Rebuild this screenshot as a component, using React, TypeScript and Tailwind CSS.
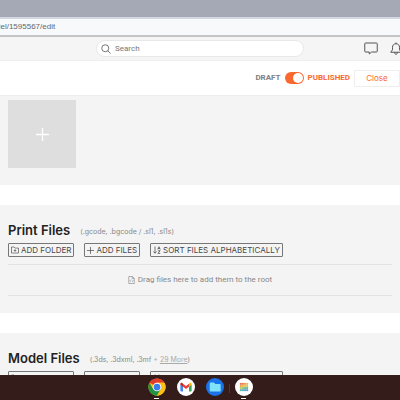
import { useState } from "react";
import type { ReactNode } from "react";

function FolderPlusIcon() {
  return (
    <svg width={8} height={8} viewBox="0 0 16 16" fill="none" stroke="currentColor" strokeWidth={1.3} aria-hidden="true">
      <path d="M1 14V2h5l2 2.2h7V14z" />
      <path d="M8 6.5v5M5.500 9h5" />
    </svg>
  );
}

function PlusIcon({ size = 7 }: { size?: number }) {
  return (
    <svg width={size} height={size} viewBox="0 0 14 14" fill="none" stroke="currentColor" strokeWidth={1.4} aria-hidden="true">
      <path d="M7 0v14M0 7h14" />
    </svg>
  );
}

function SortIcon() {
  return (
    <svg width={8} height={8} viewBox="0 0 16 16" fill="none" stroke="currentColor" strokeWidth={1.5} aria-hidden="true">
      <path d="M4 1v13M1 11l3 3.500L7 11" />
      <path d="M9.500 7 12 1.500 14.500 7M10.300 5h3.400M9.800 9.500h4.500l-4.500 5.300h4.700" />
    </svg>
  );
}

function FileCodeIcon() {
  return (
    <svg width={7} height={8} viewBox="0 0 14 16" fill="none" stroke="currentColor" strokeWidth={1.3} aria-hidden="true">
      <path d="M1.500 1h7.500l3.500 3.500V15h-11zM8.500 1v4h4" />
      <path d="M5.500 7.500 4 9.500l1.500 2M8.500 7.500l1.500 2-1.500 2" />
    </svg>
  );
}

function SearchIcon() {
  return (
    <svg width={10} height={10} viewBox="0 0 20 20" fill="none" stroke="currentColor" strokeWidth={1.8} aria-hidden="true">
      <circle cx={8.500} cy={8.500} r={7} />
      <path d="m13.500 13.500 5.500 5.500" />
    </svg>
  );
}

function ChatIcon() {
  return (
    <svg width={14} height={13} viewBox="0 0 28 26" fill="none" stroke="currentColor" strokeWidth={2} strokeLinejoin="round" aria-hidden="true">
      <path d="M3 2h22q1.500 0 1.500 1.500v15q0 1.500-1.500 1.500H15l-4.500 4V20H3q-1.500 0-1.500-1.500v-15Q1.500 2 3 2z" />
    </svg>
  );
}

function BellIcon() {
  return (
    <svg width={12} height={13} viewBox="0 0 24 26" fill="none" stroke="currentColor" strokeWidth={2} strokeLinejoin="round" aria-hidden="true">
      <path d="M12 3.500c-4.500 0-7 3-7 7v5L1.500 20.500h21L19 15.500v-5c0-4-2.500-7-7-7zM12 3.500V1" />
      <path d="M9 20.500c0 2.500 1.300 4 3 4s3-1.500 3-4" />
    </svg>
  );
}

function ChromeIcon() {
  return (
    <svg width={18} height={18} viewBox="0 0 48 48" aria-hidden="true">
      <circle cx={24} cy={24} r={23} fill="#fbc116" />
      <path d="M24 24 4.100 12.500A23 23 0 0 1 43.900 12.500H24z" fill="#e33b2e" />
      <path d="M4.100 12.500A23 23 0 0 0 24 47l10-17.300L24 24 14 29.700z" fill="#229342" />
      <path d="M43.900 12.500H24v11.500l10 5.700L24 47a23 23 0 0 0 19.900-34.500z" fill="#fbc116" />
      <circle cx={24} cy={24} r={11.500} fill="#fff" />
      <circle cx={24} cy={24} r={9} fill="#3b7ded" />
    </svg>
  );
}

function GmailIcon() {
  return (
    <svg width={18} height={18} viewBox="0 0 48 48" aria-hidden="true">
      <circle cx={24} cy={24} r={24} fill="#fff" />
      <path d="M9 17v17q0 2 2 2h5V22z" fill="#4285f4" />
      <path d="M39 17v17q0 2-2 2h-5V22z" fill="#34a853" />
      <path d="M32 15v8l7-5v-2c0-3-3-4-5-2.500z" fill="#fbbc04" />
      <path d="M16 15v8l8 6 8-6v-8l-8 6z" fill="#ea4335" />
      <path d="M9 16v2l7 5v-8l-2-1.500C12 12 9 13 9 16z" fill="#c5221f" />
    </svg>
  );
}

function FilesIcon() {
  return (
    <svg width={18} height={18} viewBox="0 0 48 48" aria-hidden="true">
      <circle cx={24} cy={24} r={24} fill="#1a73e8" />
      <path d="M10 14q0-2 2-2h9l4 4h12q2 0 2 2v16q0 2-2 2H12q-2 0-2-2z" fill="#7fe3fb" />
    </svg>
  );
}

const gridColors = [
  ["#e46f62", "#e8835a", "#ec9a55", "#eeb052"],
  ["#efa24e", "#f1bb4c", "#e9c650", "#c9c95c"],
  ["#b9c765", "#93c17a", "#6fba8c", "#62b79f"],
  ["#5fb5a2", "#54b0b8", "#59a3cc", "#6a96d0"],
];

function GridAppIcon() {
  return (
    <svg width={18} height={18} viewBox="0 0 48 48" aria-hidden="true">
      <circle cx={24} cy={24} r={24} fill="#fff" />
      {gridColors.map((row, y) =>
        row.map((fill, x) => (
          <rect key={`${x}-${y}`} x={13 + x * 5.6} y={13 + y * 5.6} width={5.2} height={5.2} fill={fill} />
        ))
      )}
    </svg>
  );
}

function ToolButton({ icon, children }: { icon: ReactNode; children: ReactNode }) {
  return (
    <button className="flex h-[14px] items-center gap-[2px] whitespace-nowrap rounded-[1px] border border-[#777] px-[2px] font-['Inter',sans-serif] text-[8px] leading-none text-[#484848]">
      {icon}
      {children}
    </button>
  );
}

function FileSection({ title, formats }: { title: string; formats: ReactNode }) {
  return (
    <section className="bg-[#f4f4f4] px-2 pt-[17px] pb-[17px]">
      <div className="flex items-end gap-[10px]">
        <h2 className="font-['Inter',sans-serif] text-[13px] leading-4 font-semibold text-[#222]">{title}</h2>
        <p className="font-['Inter',sans-serif] text-[7px] leading-3 text-[#888]">{formats}</p>
      </div>
      <div className="mt-[5px] flex gap-[10px]">
        <ToolButton icon={<FolderPlusIcon />}>ADD FOLDER</ToolButton>
        <ToolButton icon={<PlusIcon />}>ADD FILES</ToolButton>
        <ToolButton icon={<SortIcon />}>SORT FILES ALPHABETICALLY</ToolButton>
      </div>
      <div className="mt-[7px] flex h-8 items-center justify-center gap-[3px] border-y border-[#e4e4e4] text-[8px] text-[#888]">
        <FileCodeIcon />
        Drag files here to add them to the root
      </div>
    </section>
  );
}

function DockApp({ label, open, children }: { label: string; open?: boolean; children: ReactNode }) {
  return (
    <button aria-label={label} className="flex h-[21px] flex-col items-center justify-between">
      {children}
      {open && <span className="h-px w-[5px] bg-white" />}
    </button>
  );
}

export default function App() {
  const [published, setPublished] = useState(true);

  return (
    <div className="flex h-screen flex-col overflow-hidden bg-white font-['Roboto',sans-serif]">
      {/* Browser chrome */}
      <div className="h-[17px] shrink-0 bg-[#a5a9b6]" />
      <div className="flex h-5 shrink-0 items-center overflow-hidden border-t-2 border-b-2 border-t-[#d3d8e2] border-b-[#c3c4c8] bg-[#f7f9fb] text-[8px] text-[#666]">
        <span className="-ml-1 font-['Liberation_Sans',sans-serif]">del/1595567/edit</span>
      </div>

      {/* Site header */}
      <header className="grid h-6 shrink-0 grid-cols-[1fr_52%_1fr] items-center border-b border-[#eee] bg-[#f5f5f5] text-[#666]">
        <label className="col-start-2 flex h-[17px] items-center gap-[4px] rounded-full border border-[#e8e8e8] bg-white px-1">
          <SearchIcon />
          <input
            type="search"
            placeholder="Search"
            aria-label="Search"
            className="min-w-0 flex-1 text-[8px] outline-none placeholder:text-[#777]"
          />
        </label>
        <div className="-mr-[2px] flex justify-end gap-3 text-[#555]">
          <button aria-label="Messages">
            <ChatIcon />
          </button>
          <button aria-label="Notifications">
            <BellIcon />
          </button>
        </div>
      </header>

      {/* Publish bar */}
      <div className="flex h-[35px] shrink-0 items-center justify-end gap-1 border-b border-[#eee] bg-white text-[8px] font-bold">
        <label htmlFor="published" className="text-[#808080]">
          DRAFT
        </label>
        <input
          id="published"
          type="checkbox"
          role="switch"
          checked={published}
          onChange={(e) => setPublished(e.target.checked)}
          className="flex h-3 w-[19px] appearance-none items-center rounded-full bg-[#bbb] px-px before:size-[10px] before:rounded-full before:bg-white checked:justify-end checked:bg-[#fa6831]"
        />
        <label htmlFor="published" className="text-[#fa6831]">
          PUBLISHED
        </label>
        <button className="h-[17px] w-[46px] rounded-[1px] border border-[#eee] font-['Inter',sans-serif] font-normal text-[#fa6831]">
          Close
        </button>
      </div>

      {/* Editor */}
      <main className="flex min-h-0 flex-1 flex-col gap-5 overflow-hidden">
        <section className="shrink-0 bg-[#f4f4f4] px-2 pt-1 pb-[17px]">
          <button aria-label="Add image" className="flex size-[68px] items-center justify-center bg-[#dedede] text-white">
            <PlusIcon size={13} />
          </button>
        </section>
        <FileSection title="Print Files" formats="(.gcode, .bgcode / .sl1, .sl1s)" />
        <FileSection
          title="Model Files"
          formats={
            <>
              (.3ds, .3dxml, .3mf{" "}
              <span className="text-[#aaa]">
                + <a href="#formats" className="underline">29 More</a>
              </span>
              )
            </>
          }
        />
      </main>

      {/* Dock */}
      <nav className="flex h-[25px] shrink-0 items-end justify-center gap-[11px] bg-[#331c1a] pb-px">
        <DockApp label="Chrome" open>
          <ChromeIcon />
        </DockApp>
        <DockApp label="Gmail">
          <GmailIcon />
        </DockApp>
        <div className="flex items-center gap-[5px]">
          <DockApp label="Files">
            <FilesIcon />
          </DockApp>
          <span className="h-[9px] w-px bg-[#4d3634]" />
          <DockApp label="Gallery" open>
            <GridAppIcon />
          </DockApp>
        </div>
      </nav>
    </div>
  );
}
